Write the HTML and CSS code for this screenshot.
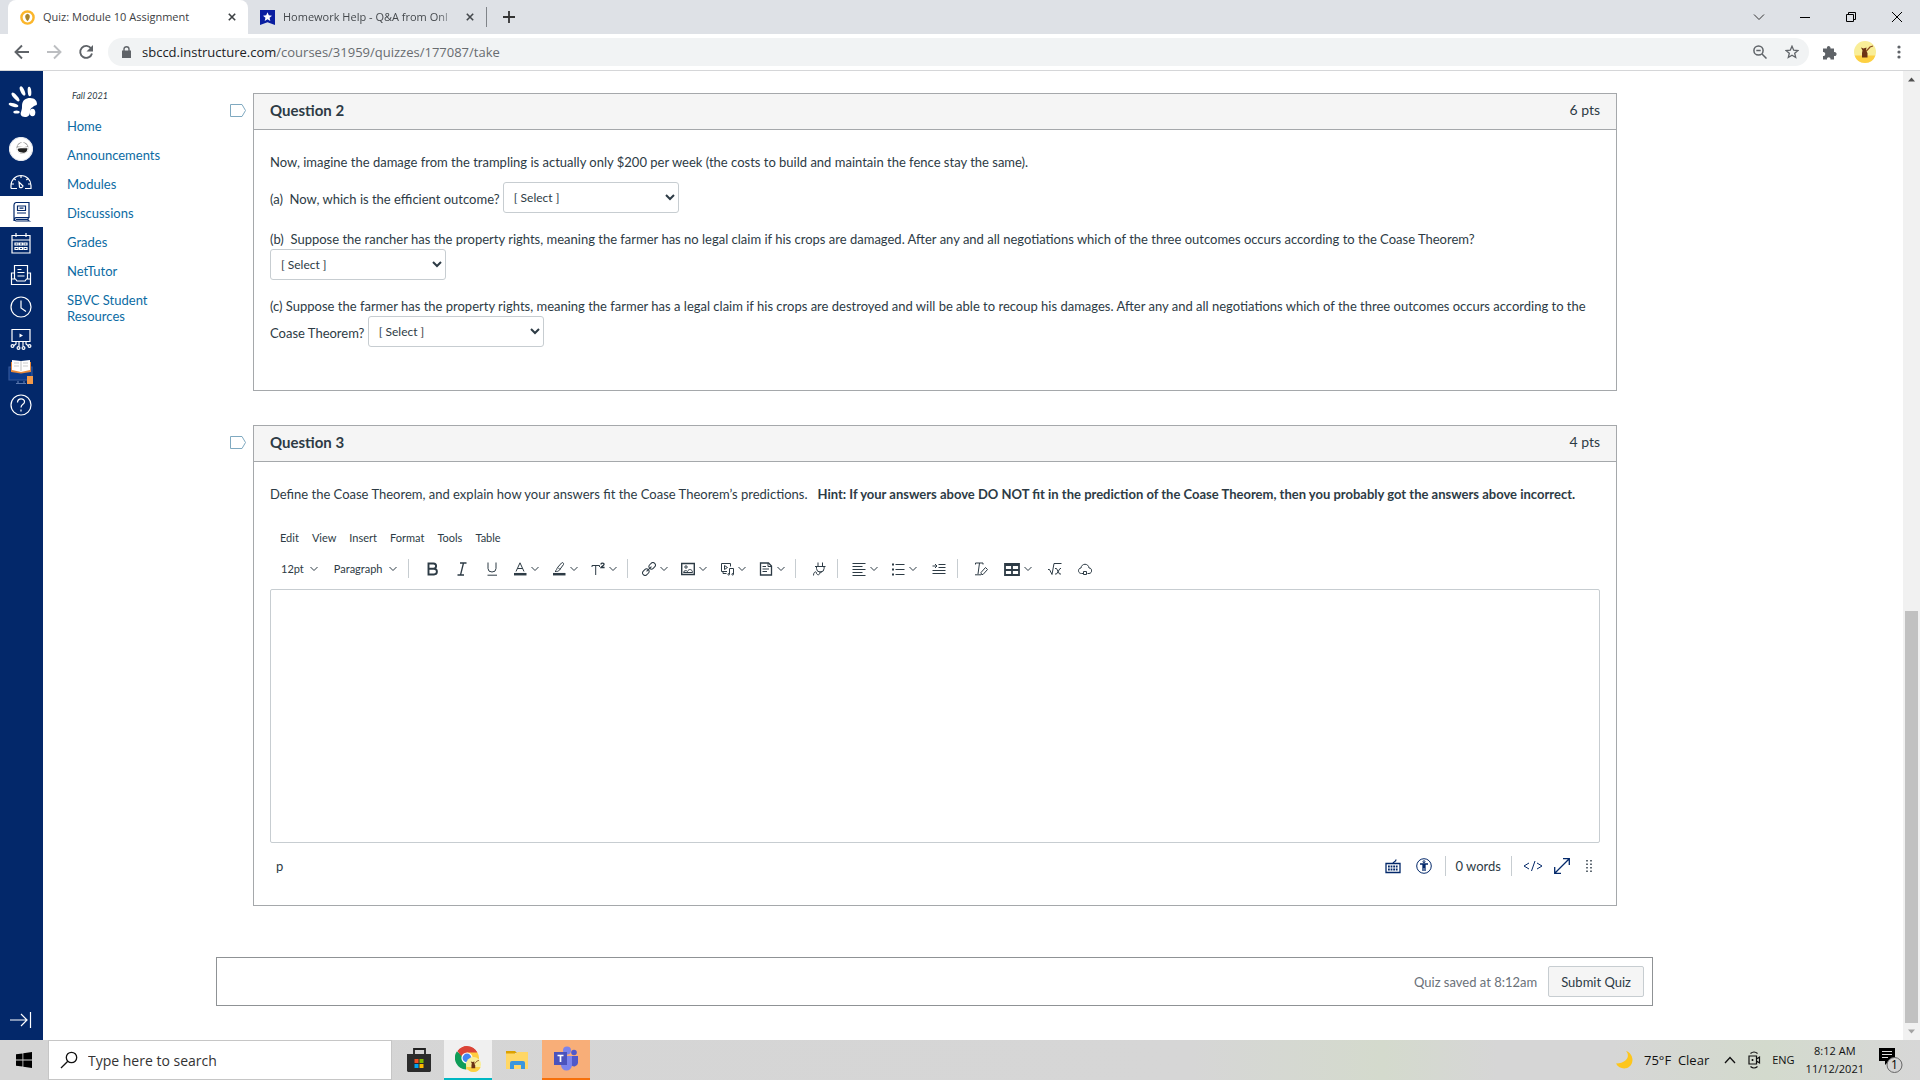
FILE: index.html
```html
<!DOCTYPE html>
<html lang="en">
<head>
<meta charset="utf-8">
<title>Quiz: Module 10 Assignment</title>
<link rel="stylesheet" href="styles.css">
</head>
<body>
<svg class="defs" aria-hidden="true">
  <symbol id="chev" viewBox="0 0 8 6"><path d="M.5 1l3.5 3.5L7.500 1" fill="none" stroke="currentColor"/></symbol>
  <symbol id="x" viewBox="0 0 8 8"><path d="M.8.8l6.400 6.400M7.200.8L.8 7.200" fill="none" stroke="currentColor" stroke-width="1.600"/></symbol>
  <symbol id="tag" viewBox="0 0 16 13"><path d="M.5.5h11.500l3.500 6-3.500 6H.5z" fill="#fff" stroke="#7fa9c0"/></symbol>
  <symbol id="bee" viewBox="0 0 22 22"><circle cx="11" cy="11" r="11" fill="#f9ee98"/><path d="M.6 14.500h20.800A11 11 0 0 1 .6 14.500z" fill="#fdd043"/><path d="M8.500 9.500L7 6.500l2.500 1 3-1-.5 3 1.500 2.500v4.500H8V12z" fill="#6b3214"/><path d="M12 10.500l4-4.500 3-1" fill="none" stroke="#8a4a20" stroke-width="1.200"/></symbol>
</svg>

<header class="browser">
  <div class="tabs">
    <div class="tab tab-active">
      <svg class="fav" viewBox="0 0 16 16"><circle cx="8" cy="8" r="6.500" fill="#fff" stroke="#fbb62b" stroke-width="2.600"/><path d="M8 4c3 1 3.500 4 0 8C4.500 8 5 5 8 4z" fill="#a8842c"/></svg>
      <span class="tab-title">Quiz: Module 10 Assignment</span>
      <button class="plain" aria-label="Close tab"><svg class="i8"><use href="#x"/></svg></button>
    </div>
    <div class="tab">
      <svg class="fav" viewBox="0 0 16 16"><path d="M0 0h16v16l-8-3-8 3z" fill="#0a1ea0"/><path d="M8 2.500l1.400 3.200 3.400.3-2.600 2.200.8 3.400L8 9.800l-3 1.800.8-3.400L3.200 6l3.400-.3z" fill="#fff"/></svg>
      <span class="tab-title fade">Homework Help - Q&amp;A from Onl</span>
      <button class="plain" aria-label="Close tab"><svg class="i8"><use href="#x"/></svg></button>
    </div>
    <span class="tab-sep"></span>
    <button class="plain" aria-label="New tab"><svg class="i12" viewBox="0 0 12 12"><path d="M6 0v12M0 6h12" stroke="#333" stroke-width="1.800"/></svg></button>
    <div class="win">
      <button class="plain" aria-label="Search tabs"><svg class="i12" viewBox="0 0 12 12"><path d="M1 3.500l5 5 5-5" fill="none" stroke="#333"/></svg></button>
      <button class="plain" aria-label="Minimize"><svg class="i12" viewBox="0 0 12 12"><path d="M1 6.500h10" stroke="#000"/></svg></button>
      <button class="plain" aria-label="Restore"><svg class="i12" viewBox="0 0 12 12"><path d="M1.500 3.500h7v7h-7zM3.500 3V1.500h7v7H9" fill="none" stroke="#000"/></svg></button>
      <button class="plain" aria-label="Close"><svg class="i12" viewBox="0 0 12 12"><path d="M1 1l10 10M11 1L1 11" stroke="#000"/></svg></button>
    </div>
  </div>
  <div class="toolbar">
    <button class="plain" aria-label="Back"><svg class="i16" viewBox="0 0 16 16"><path d="M15 8H2M8 1.500L1.500 8 8 14.500" fill="none" stroke="#5f6368" stroke-width="1.900"/></svg></button>
    <button class="plain" aria-label="Forward"><svg class="i16" viewBox="0 0 16 16"><path d="M1 8h13M8 1.500L14.500 8 8 14.500" fill="none" stroke="#bcbec1" stroke-width="1.900"/></svg></button>
    <button class="plain" aria-label="Reload"><svg class="i16" viewBox="0 0 16 16"><path d="M13.200 4.500A6 6 0 1 0 14 9.500" fill="none" stroke="#5f6368" stroke-width="1.900"/><path d="M15 1v6.500H8.500z" fill="#5f6368"/></svg></button>
    <div class="omnibox">
      <svg class="lock" viewBox="0 0 9 12"><path d="M0 4.500h9V12H0z" fill="#5f6368"/><path d="M2 5V3a2.500 2.300 0 0 1 5 0v2" fill="none" stroke="#5f6368" stroke-width="1.400"/></svg>
      <span class="url">sbccd.instructure.com<span>/courses/31959/quizzes/177087/take</span></span>
      <button class="plain" aria-label="Zoom"><svg class="i14" viewBox="0 0 14 14"><circle cx="5.500" cy="5.500" r="4.600" fill="none" stroke="#5f6368" stroke-width="1.500"/><path d="M9 9l4.500 4.500M3.300 5.500h4.400" stroke="#5f6368" stroke-width="1.500"/></svg></button>
      <button class="plain" aria-label="Bookmark"><svg class="i14" viewBox="0 0 14 14"><path d="M7 1.200l1.700 4 4.300.3-3.300 2.800 1 4.200L7 10.300l-3.700 2.200 1-4.200L1 5.500l4.300-.3z" fill="none" stroke="#5f6368" stroke-width="1.300"/></svg></button>
    </div>
    <button class="plain" aria-label="Extensions"><svg class="i16" viewBox="0 0 16 16"><path d="M1 4.500h4C4 1 9 1 8.500 4.500H12V8c3.500-.5 3.500 4.500 0 4v3.500H8.500c.5-3-4-3-3.500 0H1V12c3 .5 3-4.500 0-4z" fill="#5f6368"/></svg></button>
    <button class="plain" aria-label="Profile"><svg class="i22"><use href="#bee"/></svg></button>
    <button class="plain" aria-label="Menu"><svg class="i14" viewBox="0 0 14 14"><g fill="#5f6368"><circle cx="7" cy="2" r="1.600"/><circle cx="7" cy="7" r="1.600"/><circle cx="7" cy="12" r="1.600"/></g></svg></button>
  </div>
</header>

<div class="page">
  <nav class="rail" aria-label="Global">
    <a class="logo" href="#" aria-label="Home"><svg viewBox="0 0 30 32"><g fill="#fff"><path d="M15 21c0-6 4-8 8-8 5 0 7 3 7 6 0 2-3 1-4 3-2 1-3 2-3 5 0 3-2 5-5 5-4 0-5-3-4-5 1-3 1-4 1-6z"/><ellipse cx="25.500" cy="27.500" rx="2.800" ry="3.800"/><ellipse cx="15.500" cy="6" rx="2" ry="5" transform="rotate(-25 15.500 6)"/><ellipse cx="22.500" cy="6.500" rx="1.800" ry="4.800" transform="rotate(-5 22.500 6.500)"/><ellipse cx="8.500" cy="12" rx="1.900" ry="5.500" transform="rotate(-42 8.500 12)"/><ellipse cx="6.500" cy="20" rx="1.700" ry="5" transform="rotate(-75 6.500 20)"/><ellipse cx="9.500" cy="27" rx="3.200" ry="1.600"/></g></svg></a>
    <a class="avatar" href="#" aria-label="Account"><svg viewBox="0 0 24 24"><circle cx="12" cy="12" r="11.500" fill="#fff" stroke="#e4e7ee"/><circle cx="13.500" cy="11" r="5.500" fill="#c9c9c6" stroke="#999"/><path d="M8 11.500c3-2 6 0 11-1 .5 4-2 6.500-6 5.500-3 0-5-1.500-5-4.500z" fill="#222"/><path d="M9.500 8.500l4-3 4 3-2.500 1z" fill="#fff"/></svg></a>
    <a class="dash" href="#" aria-label="Dashboard"><svg viewBox="0 0 22 22"><path d="M1 18.500v-3a10 10 0 0 1 20 0v3h-6M7 18.500H1M11 5.500v2.500M4 8.500l1.700 1.500M18 8.500L16.300 10M1.500 14H4M18 14h2.500M9 12l.5 5a2 2 0 0 0 3.500-1z"/></svg></a>
    <a class="on" href="#" aria-label="Courses"><svg viewBox="0 0 22 22"><path d="M4 20V4a2.500 2.500 0 0 1 2-2.500h13v15H5.500M19 16.500a2 2 0 0 0 0 3.500H6a1.800 1.800 0 0 1 0-3.500M7.500 5h8v4.500h-8zM9.500 7.200h4M6 18.300h12M7 12h9"/></svg></a>
    <a href="#" aria-label="Calendar"><svg viewBox="0 0 22 22"><path d="M2 3.500h18V21H2zM2 8h18M6 1v4M16 1v4M5 11h3v2H5zM9.500 11h3v2h-3zM14 11h3v2h-3zM5 15.500h3v2H5zM9.500 15.500h3v2h-3zM14 15.500h3v2h-3z"/></svg></a>
    <a href="#" aria-label="Inbox"><svg viewBox="0 0 22 22"><path d="M4.500 15V1.500h13V15M4.500 9H1.500v11.500h19V9h-3M1.500 15h4l1.500 2h8l1.500-2h4M7.500 5.500h4M7.500 8.500h7M7.500 12h7"/></svg></a>
    <a href="#" aria-label="History"><svg viewBox="0 0 22 22"><circle cx="11" cy="11" r="10"/><path d="M11 4.500V12l5 3.500"/></svg></a>
    <a href="#" aria-label="Studio"><svg viewBox="0 0 22 22"><path d="M2 1.500h18v12H2zM6 14v2l-2 1.500M9 14v4M13 14v4M16 14v2l2 1.500"/><path d="M9.500 5.500v4l3.500-2z" fill="#fff" stroke="none"/><circle cx="2.500" cy="18" r="1.400"/><circle cx="8.500" cy="20" r="1.400"/><circle cx="13.500" cy="20" r="1.400"/><circle cx="19.500" cy="18" r="1.400"/></svg></a>
    <a class="book" href="#" aria-label="Library"><svg viewBox="0 0 26 26"><path d="M1 8h23v13H1z" fill="#0b3a8c" stroke="#34589a"/><path d="M8 24.500h10M10 22v2M16 22v2" stroke="#5a77ad"/><path d="M3 3h20v10l-10 1.500L3 13z" fill="#e8893b" stroke="none"/><path d="M4 1l9 1 9-1v10l-9 2-9-2z" fill="#fff" stroke="none"/><path d="M13 2v10M6 4h5M6 7h5M15 4h5M15 7h5" stroke="#ccc"/><path d="M19 17h6v8h-6z" fill="#f39a4a" stroke="none"/></svg></a>
    <a href="#" aria-label="Help"><svg viewBox="0 0 22 22"><circle cx="11" cy="11" r="10"/><path d="M7.500 8.500C7.500 3.500 15 4 14.500 8c-.2 2.500-3.500 2.300-3.500 5.500M11 15.500v2"/></svg></a>
    <a class="expand" href="#" aria-label="Expand navigation"><svg viewBox="0 0 22 22"><path d="M0 11h17M11 5l6 6-6 6M20.500 3v16"/></svg></a>
  </nav>

  <nav class="course" aria-label="Course">
    <span class="term">Fall 2021</span>
    <a href="#">Home</a>
    <a href="#">Announcements</a>
    <a href="#">Modules</a>
    <a href="#">Discussions</a>
    <a href="#">Grades</a>
    <a href="#">NetTutor</a>
    <a href="#">SBVC Student Resources</a>
  </nav>

  <main>
    <section class="question">
      <button class="plain flag" aria-label="Flag question 2"><svg><use href="#tag"/></svg></button>
      <article class="card">
        <header><h2>Question 2</h2><span>6 pts</span></header>
        <div class="body">
          <p>Now, imagine the damage from the trampling is actually only $200 per week (the costs to build and maintain the fence stay the same).</p>
          <p><label for="qa">(a)&nbsp; Now, which is the efficient outcome?</label> <select id="qa"><option>[ Select ]</option></select></p>
          <p><label for="qb">(b)&nbsp; Suppose the rancher has the property rights, meaning the farmer has no legal claim if his crops are damaged. After any and all negotiations which of the three outcomes occurs according to the Coase Theorem?</label> <select id="qb"><option>[ Select ]</option></select></p>
          <p><label for="qc">(c) Suppose the farmer has the property rights, meaning the farmer has a legal claim if his crops are destroyed and will be able to recoup his damages. After any and all negotiations which of the three outcomes occurs according to the Coase Theorem?</label> <select id="qc"><option>[ Select ]</option></select></p>
        </div>
      </article>
    </section>

    <section class="question">
      <button class="plain flag" aria-label="Flag question 3"><svg><use href="#tag"/></svg></button>
      <article class="card">
        <header><h2>Question 3</h2><span>4 pts</span></header>
        <div class="body essay">
          <p><label for="answer">Define the Coase Theorem, and explain how your answers fit the Coase Theorem’s predictions. &nbsp; <strong>Hint: If your answers above DO NOT fit in the prediction of the Coase Theorem, then you probably got the answers above incorrect.</strong></label></p>
          <div class="menus">
            <button class="plain">Edit</button><button class="plain">View</button><button class="plain">Insert</button><button class="plain">Format</button><button class="plain">Tools</button><button class="plain">Table</button>
          </div>
          <div class="tools">
            <button class="text">12pt <svg class="chev"><use href="#chev"/></svg></button>
            <button class="text block">Paragraph <svg class="chev"><use href="#chev"/></svg></button>
            <i></i>
            <button aria-label="Bold"><svg viewBox="0 0 14 14"><path d="M3.500 1.500h5a2.600 2.600 0 0 1 0 5.200h-5zM3.500 6.700h5.500a2.900 2.900 0 0 1 0 5.800H3.500z" stroke-width="1.900"/></svg></button>
            <button aria-label="Italic"><svg viewBox="0 0 14 14"><path d="M5 1h6.500M2.500 13H9M8.500 1l-3 12" stroke-width="1.300"/></svg></button>
            <button aria-label="Underline"><svg viewBox="0 0 14 14"><path d="M3 .5v6a4 3.500 0 0 0 8 0v-6M2.500 13.200h9.500"/></svg></button>
            <button class="dd" aria-label="Text color"><svg viewBox="0 0 14 14"><path d="M3 9.500L7 .8l4 8.700M4.500 6.500h5"/><path d="M1 12.200h12.500" stroke-width="2.500"/></svg><svg class="chev"><use href="#chev"/></svg></button>
            <button class="dd" aria-label="Highlight"><svg viewBox="0 0 14 14"><path d="M3 9.500c2 0 3.500 0 4.500-1.500L11.500 2.500c.5-1.500-1-2.500-2-1.500L5.500 5.500C4.500 7 5 8 3 9.500zM6 5.500L8 7.500"/><path d="M1 12.200h12.500" stroke-width="2.500"/></svg><svg class="chev"><use href="#chev"/></svg></button>
            <button class="dd" aria-label="Superscript"><svg viewBox="0 0 14 14"><path d="M1 5V3.500h7.500V5M4.700 3.500V13"/><path d="M10 2.500c0-2 3.300-1.700 3 0-.2 1.200-2.500 1.800-3 3h3.600" stroke-width="1.400"/></svg><svg class="chev"><use href="#chev"/></svg></button>
            <i></i>
            <button class="dd" aria-label="Link"><svg viewBox="0 0 14 14"><g transform="rotate(-45 7 7)"><rect x="-1" y="4.500" width="7" height="5" rx="2.500"/><rect x="8" y="4.500" width="7" height="5" rx="2.500"/><path d="M3.500 7h7"/></g></svg><svg class="chev"><use href="#chev"/></svg></button>
            <button class="dd" aria-label="Image"><svg viewBox="0 0 14 14"><path d="M.7 1.500h12.600v11H.7z" stroke-width="1.400"/><path d="M2.500 10.500c0-2 3-2.500 4-1 1-3 5-2.500 5 1z"/><circle cx="5" cy="5" r="1.200"/></svg><svg class="chev"><use href="#chev"/></svg></button>
            <button class="dd" aria-label="Media"><svg viewBox="0 0 14 14"><path d="M7 9.500H1.500v-8h9V4.500M4.500 3.500v4l3-2zM3 9.500v2h3.500M9.500 12V6.500h4V12"/><circle cx="8.700" cy="12.300" r=".8"/><circle cx="12.700" cy="12.300" r=".8"/></svg><svg class="chev"><use href="#chev"/></svg></button>
            <button class="dd" aria-label="Document"><svg viewBox="0 0 14 14"><path d="M1.500 1h8L12.500 4v9h-11z" stroke-width="1.300"/><path d="M9 1v3.500h3.500M3.500 4.500H7M3.500 7H10M3.500 9.500H8"/></svg><svg class="chev"><use href="#chev"/></svg></button>
            <i></i>
            <button aria-label="Apps"><svg viewBox="0 0 14 14"><path d="M6 .5v3.500M10.500.5v3.500M3 4.500h10.500M4.500 5v1.500a3.800 3.500 0 0 0 7.600 0V5M8 10c0 4-3.500 3-3.500 1 0-2-3-1.500-3 2.500M8 10h2"/></svg></button>
            <i></i>
            <button class="dd" aria-label="Align"><svg viewBox="0 0 14 14"><path d="M.5 1.500h13M.5 4.500h10M.5 7.500h13M.5 10.500h10M.5 13.500h13"/></svg><svg class="chev"><use href="#chev"/></svg></button>
            <button class="dd" aria-label="List"><svg viewBox="0 0 14 14"><path d="M4.500 2.500h9M4.500 7.500h9M4.500 12.500h9"/><path d="M1 2.500h2M1 7.500h2M1 12.500h2" stroke-width="2"/></svg><svg class="chev"><use href="#chev"/></svg></button>
            <button aria-label="Indent"><svg viewBox="0 0 14 14"><path d="M6.500 2.500h7M6.500 5.500h7M.5 8.500h13M.5 11.500h13M.5 4h4M3 2l2 2-2 2"/></svg></button>
            <i></i>
            <button aria-label="Clear formatting"><svg viewBox="0 0 14 14"><path d="M1.500 2.500V1h7.500v1.500M5.500 1l-1.500 11M1 12.800h6M7 10.500L11.500 5.500l2 2L9 12.500H7.500z"/></svg></button>
            <button class="dd table" aria-label="Table"><svg class="wide" viewBox="0 0 16 14"><path d="M1 2h14v11H1zM1 3h14M1 8h14M8 3v10" stroke-width="1.800"/></svg><svg class="chev"><use href="#chev"/></svg></button>
            <button aria-label="Equation"><svg viewBox="0 0 14 14"><path d="M0 7.500h1.500l2.500 5L6 1.500h7.500M7 6.500h1.500l3 5.500H13M13 6.500h-1L8.500 12H7"/></svg></button>
            <button aria-label="Cloud"><svg viewBox="0 0 14 14"><path d="M5 11.500H3.500C-.5 11.500-.3 6 3 6c.5-5 7.500-5 8 0 3.500-.2 3.500 5.500 0 5.500H9.500M5.500 12.500v-3h3v3z"/></svg></button>
          </div>
          <textarea id="answer"></textarea>
          <div class="status">
            <span class="path">p</span>
            <button class="plain" aria-label="Keyboard shortcuts"><svg class="i16" viewBox="0 0 16 16"><path d="M1 5.500h14v9H1zM8 5.500c0-2.500 3-1 3-4" stroke-width="1.300"/><path d="M3 8.500h10M3 11.500h10" stroke-width="1.800" stroke-dasharray="1.800 .8"/></svg></button>
            <button class="plain" aria-label="Accessibility checker"><svg class="i16" viewBox="0 0 16 16"><circle cx="8" cy="8" r="7.300"/><path d="M4 6h8M8 6v4M7 6v7M9 6v7" stroke-width="1.300"/><circle cx="8" cy="3.700" r="1"/></svg></button>
            <i></i>
            <span class="words">0 words</span>
            <i></i>
            <button class="plain" aria-label="HTML editor"><svg class="i20" viewBox="0 0 20 16"><path d="M6 5L1 8l5 3M14 5l5 3-5 3M12 3L8.500 13"/></svg></button>
            <button class="plain near" aria-label="Fullscreen"><svg class="i16" viewBox="0 0 16 16"><path d="M1 15L15 1M9 .7h6.300V7M.7 9v6.300H7" stroke-width="1.300"/></svg></button>
            <button class="plain near" aria-label="Resize"><svg class="i16" viewBox="0 0 16 16"><path d="M6 2v13M10 2v13" stroke="#3a4652" stroke-width="1.600" stroke-dasharray="1.500 2"/></svg></button>
          </div>
        </div>
      </article>
    </section>

    <div class="submit"><span>Quiz saved at 8:12am</span><button>Submit Quiz</button></div>
  </main>

  <div class="scroll" aria-hidden="true">
    <svg viewBox="0 0 17 17"><path d="M5 10.500l3.500-4 3.500 4z" fill="#505050"/></svg>
    <div class="gap"></div>
    <div class="thumb"></div>
    <svg viewBox="0 0 17 17"><path d="M5 6.500l3.500 4 3.500-4z" fill="#a3a3a3"/></svg>
  </div>
</div>

<footer class="taskbar">
  <button class="plain start" aria-label="Start"><svg class="i16" viewBox="0 0 16 16"><path d="M0 2.300L6.500 1.400v6.200H0zM7.300 1.300L16 0v7.600H7.300zM0 8.400h6.500v6.200L0 13.700zM7.300 8.400H16V16l-8.700-1.300z"/></svg></button>
  <label class="search"><svg class="i18" viewBox="0 0 18 18"><circle cx="11.500" cy="6.500" r="5.200" fill="none" stroke="#111" stroke-width="1.300"/><path d="M7.800 10.200L1 17" stroke="#111" stroke-width="1.300"/></svg><input type="text" placeholder="Type here to search" aria-label="Search"></label>
  <button class="app" aria-label="Store"><svg viewBox="0 0 24 26"><path d="M7 7V2h11v5" fill="none" stroke="#222" stroke-width="1.800"/><path d="M0 7h24v17l-1 1H1l-1-1z" fill="#2b2b2b"/><path d="M7.500 12h4v4h-4z" fill="#f25022"/><path d="M12.500 12h4v4h-4z" fill="#7fba00"/><path d="M7.500 17h4v4h-4z" fill="#00a4ef"/><path d="M12.500 17h4v4h-4z" fill="#ffb900"/></svg></button>
  <button class="app chrome" aria-label="Chrome"><svg viewBox="0 0 26 26"><path d="M12 12L2.500 5.500A11.500 11.500 0 0 1 22 6z" fill="#db4437"/><path d="M12 12L1.800 5.600A11.500 11.500 0 0 0 11 23.400z" fill="#0f9d58"/><path d="M12 12l-1 11.400A11.500 11.500 0 0 0 22.200 6H12z" fill="#ffcd40"/><path d="M2.500 5A11.500 11.500 0 0 1 22.200 6.500H12c-3 0-5 2-5.500 4z" fill="#db4437"/><circle cx="12" cy="12" r="5.600" fill="#fff"/><circle cx="12" cy="12" r="4.400" fill="#4285f4"/><svg x="11" y="11" width="15" height="15" viewBox="0 0 22 22"><use href="#bee" width="22" height="22"/></svg></svg></button>
  <button class="app" aria-label="File Explorer"><svg viewBox="0 0 24 26"><path d="M1 4h9l2 2h-2v4H1z" fill="#dca100"/><path d="M1 6.500h10l2-1.500h10v17H1z" fill="#ffd766"/><path d="M5 22v-6a2 2 0 0 1 2-2h11a2 2 0 0 1 2 2v6h-4v-4H9v4z" fill="#3a96dd"/></svg></button>
  <button class="app teams" aria-label="Teams"><svg viewBox="0 0 26 26"><circle cx="21" cy="6.500" r="2.800" fill="#5059c9"/><circle cx="14" cy="4.500" r="4" fill="#7b83eb"/><path d="M17 10h8v7a4 4 0 0 1-7 2z" fill="#5059c9"/><path d="M8 10h11v9a5.500 5.500 0 0 1-11 0z" fill="#7b83eb"/><path d="M1 6h13v13H1z" fill="#4b53bc"/><path d="M4.500 9.500h6M7.500 9.500V16" stroke="#fff" stroke-width="1.700"/></svg></button>
  <div class="tray">
    <svg class="i18" viewBox="0 0 18 18"><path d="M11 0c4 4 2 12-10 12.500C5 20 17 19 17.500 9 17.500 5 15 1 11 0z" fill="#fdc61c"/></svg>
    <span class="weather">75°F&nbsp; Clear</span>
    <svg class="i12" viewBox="0 0 12 12"><path d="M1 9l5-5.500L11 9" fill="none" stroke="#111" stroke-width="1.300"/></svg>
    <svg class="meet" viewBox="0 0 14 18"><path d="M2 5h7.500v8H2zM9.500 8l3-2v6l-3-2M3.500 2.500q3.500-3 7 0M3.500 15.500q3.500 3 7 0" fill="none" stroke="#111" stroke-width="1.200"/><circle cx="5.500" cy="9" r="1"/></svg>
    <span>ENG</span>
    <span class="clock">8:12 AM<br>11/12/2021</span>
    <svg class="note" viewBox="0 0 24 26"><path d="M0 1h16v13H10l-4 4v-4H0z"/><path d="M3 4.500h10M3 7.500h10M3 10.500h6" stroke="#ddd" stroke-width="1.200"/><circle cx="15.500" cy="18" r="7.500" fill="#d4d4d4" stroke="#666"/><text x="15.500" y="22" text-anchor="middle">1</text></svg>
  </div>
</footer>
</body>
</html>
```
FILE: styles.css
```css
* { box-sizing: border-box; }
body {
  margin: 0;
  height: 100vh;
  display: flex;
  flex-direction: column;
  overflow: hidden;
  background: #fff;
  color: #2d3b45;
  font: 13px/20px Lato, sans-serif;
}
svg { display: block; flex: none; }
.defs { position: absolute; width: 0; height: 0; }
button { font: inherit; color: inherit; cursor: pointer; }
.plain { border: 0; padding: 0; background: none; display: flex; align-items: center; justify-content: center; flex: none; }
.i8 { width: 8px; height: 8px; }
.i12 { width: 12px; height: 12px; }
.i14 { width: 14px; height: 14px; }
.i16 { width: 16px; height: 16px; }
.i18 { width: 18px; height: 18px; }
.i20 { width: 20px; height: 16px; }
.i22 { width: 22px; height: 22px; }

/* Browser frame */
.browser { flex: none; font-family: "Open Sans", sans-serif; border-bottom: 1px solid #d5d6d8; }
.tabs { display: flex; align-items: center; height: 34px; padding-left: 8px; background: #dee1e6; color: #45494d; }
.tab { display: flex; align-items: center; gap: 8px; width: 238px; height: 34px; padding: 0 12px; font-size: 11px; }
.tab-active { width: 240px; background: #fff; border-radius: 8px 8px 0 0; color: #3c4043; }
.fav { width: 15px; height: 15px; }
.tab-title { flex: 1; overflow: hidden; white-space: nowrap; }
.fade { -webkit-mask-image: linear-gradient(90deg, #000 88%, transparent); mask-image: linear-gradient(90deg, #000 88%, transparent); }
.tab-sep { width: 1px; height: 20px; margin-right: 16px; background: #808489; }
.win { display: flex; margin-left: auto; }
.win button { width: 46px; height: 30px; }
.toolbar { display: flex; align-items: center; height: 36px; padding: 0 14px; }
.toolbar > button { margin-right: 16px; }
.toolbar > button:last-child { margin-right: 0; }
.omnibox { flex: 1; display: flex; align-items: center; gap: 18px; height: 28px; margin: 0 13px 0 -2px; padding: 0 10px 0 14px; border-radius: 14px; background: #f1f3f4; }
.lock { width: 9px; height: 12px; margin-right: -7px; }
.url { flex: 1; font-size: 13px; color: #202124; }
.url span { color: #686c70; }

/* Page columns */
.page { flex: 1; min-height: 0; display: flex; }
.rail { width: 43px; flex: none; display: flex; flex-direction: column; background: #03286a; }
.rail a { display: flex; align-items: center; justify-content: center; height: 32px; padding-right: 1px; color: #fff; }
.rail svg { width: 22px; height: 22px; fill: none; stroke: currentColor; stroke-width: 1.2; }
.rail .logo { height: 62px; padding: 0 0 2px; }
.rail .logo svg { width: 30px; height: 32px; stroke: none; }
.rail .avatar svg { width: 24px; height: 24px; }
.rail .dash { height: 31px; }
.rail .on { height: 31px; background: #fff; color: #03286a; }
.rail .book { height: 34px; }
.rail .book svg { width: 26px; height: 26px; }
.rail .expand { margin-top: auto; height: 40px; }
.course { width: 173px; flex: none; padding: 19px 40px 0 24px; }
.course a { display: block; padding: 6px 0 7px; line-height: 16px; color: #0b6ba3; text-decoration: none; }
.term { display: block; height: 22px; padding-left: 5px; font-size: 9px; line-height: 12px; font-style: italic; }
main { flex: 1; min-width: 0; margin-right: 250px; padding-top: 22px; }

/* Questions */
.question { display: grid; grid-template-columns: 37px 1fr; align-items: start; margin: 0 36px 34px 0; }
.flag { margin: 11px 0 0 6px; }
.flag svg { width: 16px; height: 13px; }
.card { border: 1px solid #a5a8ab; }
.card > header { display: flex; justify-content: space-between; align-items: center; height: 36px; padding: 0 16px 3px; background: #f5f5f5; border-bottom: 1px solid #a5a8ab; font-weight: 700; }
.card h2 { margin: 0; font-size: 15px; }
.card header span { font-size: 14px; font-weight: 400; }
.body { padding: 22px 16px 27px; }
.body p { margin: 0 0 9px; }
.body p:first-child { margin-bottom: 10px; }
.body select {
  width: 176px;
  height: 31px;
  margin: 0 0 7px;
  padding: 0 6px;
  vertical-align: middle;
  border: 1px solid #c7cdd1;
  border-radius: 3px;
  background: #fff;
  color: #2d3b45;
  font: 12px Lato, sans-serif;
}

/* Rich content editor */
.body.essay { padding-bottom: 21px; }
.menus { display: flex; gap: 13px; margin-top: 24px; padding-left: 10px; font-size: 11px; }
.tools { display: flex; align-items: center; height: 41px; padding-left: 11px; color: #2d3b45; font-size: 11px; }
.tools button { display: flex; align-items: center; justify-content: center; gap: 4px; width: 30px; flex: none; border: 0; padding: 0; background: none; }
.tools .dd { width: 39px; }
.tools .table { width: 44px; }
.tools .text { width: auto; gap: 6px; margin-right: 16px; }
.tools .block { margin-right: 8px; }
.tools svg { width: 14px; height: 14px; fill: none; stroke: currentColor; }
.tools .wide { width: 16px; }
.tools .chev { width: 8px; height: 6px; stroke: none; }
.tools i { width: 1px; height: 19px; margin: 0 8px 0 3px; background: #c7cdd1; }
textarea { display: block; width: 100%; height: 254px; resize: none; padding: 10px; border: 1px solid #c7cdd1; border-radius: 2px; font: inherit; }
.status { display: flex; align-items: center; height: 37px; margin-top: 4px; padding-right: 3px; color: #03286a; }
.status svg { fill: none; stroke: currentColor; }
.status button { margin-left: 15px; }
.status i { width: 1px; height: 20px; margin-left: 13px; background: #c7cdd1; }
.status .path { flex: 1; padding-left: 6px; color: #2d3b45; }
.status .words { margin: 0 -3px 0 10px; color: #2d3b45; }
.status i + button { margin-left: 11px; }
.status .near { margin-left: 11px; }

.submit { display: flex; align-items: center; justify-content: flex-end; gap: 11px; height: 49px; margin-top: 51px; padding-right: 8px; border: 1px solid #8f9295; color: #6a7179; }
.submit button { height: 31px; padding: 0 12px; border: 1px solid #c7cdd1; border-radius: 2px; background: #f5f5f5; color: #2d3b45; }

.scroll { width: 17px; flex: none; display: flex; flex-direction: column; background: #f1f1f1; }
.scroll svg { width: 17px; height: 17px; }
.gap { flex: 523; }
.thumb { flex: 412; margin: 0 2px; background: #c1c1c1; }

/* Taskbar */
.taskbar { flex: none; display: flex; height: 40px; font-family: "Open Sans", sans-serif; color: #111; background: linear-gradient(90deg, #d5d5d5 0, #d6d6d6 62%, #d4dacd 72%, #d6d6d6 78%, #d6d6d6 84%, #d3dacd 92%, #d7d7d7); }
.start { width: 48px; }
.search { display: flex; align-items: center; gap: 10px; width: 344px; padding-left: 11px; background: #fff; border: 1px solid #c6c6c6; }
.search input { flex: 1; min-width: 0; border: 0; padding: 0; outline: 0; background: none; font: 14px "Open Sans", sans-serif; }
.search input::placeholder { color: #333; }
.app { display: flex; align-items: center; justify-content: center; width: 48px; border: 0; padding: 0; margin-right: 1px; background: none; }
.search + .app { margin-left: 3px; }
.app svg { width: 26px; height: 26px; }
.app svg svg { width: 15px; height: 15px; }
.chrome { background: #f0f0f0; border-bottom: 2px solid #00b7c3; }
.teams { background: #f8ae78; border-bottom: 2px solid #f7700a; }
.tray { display: flex; align-items: center; gap: 11px; margin-left: auto; padding-right: 17px; font-size: 11px; }
.weather { margin-right: 4px; font-size: 13px; }
.meet { width: 14px; height: 18px; }
.clock { text-align: center; line-height: 18px; }
.note { width: 24px; height: 26px; margin-left: 4px; font-size: 12px; }
```
